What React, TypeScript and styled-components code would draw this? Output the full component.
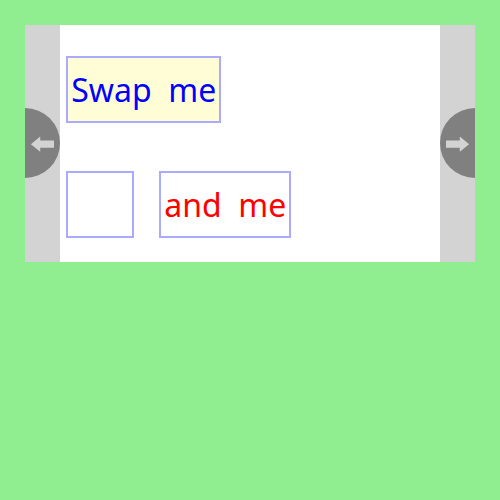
import React from 'react';
import styled, { createGlobalStyle } from 'styled-components';

const GlobalStyle = createGlobalStyle`
  body { margin: 0; background: lightgreen; font-family: "Noto Sans", sans-serif; }
`;

const Page = styled.main`
  padding: 25px;
`;

const Slider = styled.section`
  display: flex;
  width: 450px;
  height: 237px;
  background: white;
`;

const Rail = styled.div`
  box-sizing: border-box;
  flex: none;
  width: 35px;
  padding-top: 83px;
  background: lightgray;
`;

const ArrowButton = styled.button<{ $side: 'left' | 'right' }>`
  display: block;
  width: 35px;
  height: 70px;
  padding: 0;
  border: 0;
  background: gray;
  border-radius: ${p => (p.$side === 'left' ? '0 35px 35px 0' : '35px 0 0 35px')};
`;

const Arrow = styled.svg<{ $flip?: boolean }>`
  display: block;
  width: 35px;
  height: 70px;
  fill: lightgray;
  transform: ${p => (p.$flip ? 'scaleX(-1)' : 'none')};
`;

const Content = styled.div`
  flex: 1;
  display: flex;
  flex-direction: column;
  gap: 48px;
  padding: 31px 6px 0;
`;

const Row = styled.div`
  display: flex;
  gap: 25px;
`;

const Slot = styled.div<{ $width: number; $bg?: string; $color?: string }>`
  box-sizing: border-box;
  width: ${p => p.$width}px;
  height: 67px;
  padding-left: 3.3px;
  border: 2px solid #aaaaff;
  background: ${p => p.$bg ?? 'white'};
  color: ${p => p.$color ?? 'black'};
  font-size: 32px;
  line-height: 63px;
  white-space: pre;
`;

const ArrowIcon = ({ flip }: { flip?: boolean }) => (
  <Arrow viewBox="0 0 35 70" $flip={flip}>
    <path d="M5.9 36.2 L15.2 28.6 V32.5 H29 V39.8 H15.2 V43.8 Z" />
  </Arrow>
);

export default function App() {
  return (
    <Page>
      <GlobalStyle />
      <Slider>
        <Rail>
          <ArrowButton $side="left" aria-label="Previous"><ArrowIcon /></ArrowButton>
        </Rail>
        <Content>
          <Row>
            <Slot $width={155} $bg="#fffdd5" $color="blue">{'Swap  me'}</Slot>
          </Row>
          <Row>
            <Slot $width={68} />
            <Slot $width={132} $color="red">{'and  me'}</Slot>
          </Row>
        </Content>
        <Rail>
          <ArrowButton $side="right" aria-label="Next"><ArrowIcon flip /></ArrowButton>
        </Rail>
      </Slider>
    </Page>
  );
}
